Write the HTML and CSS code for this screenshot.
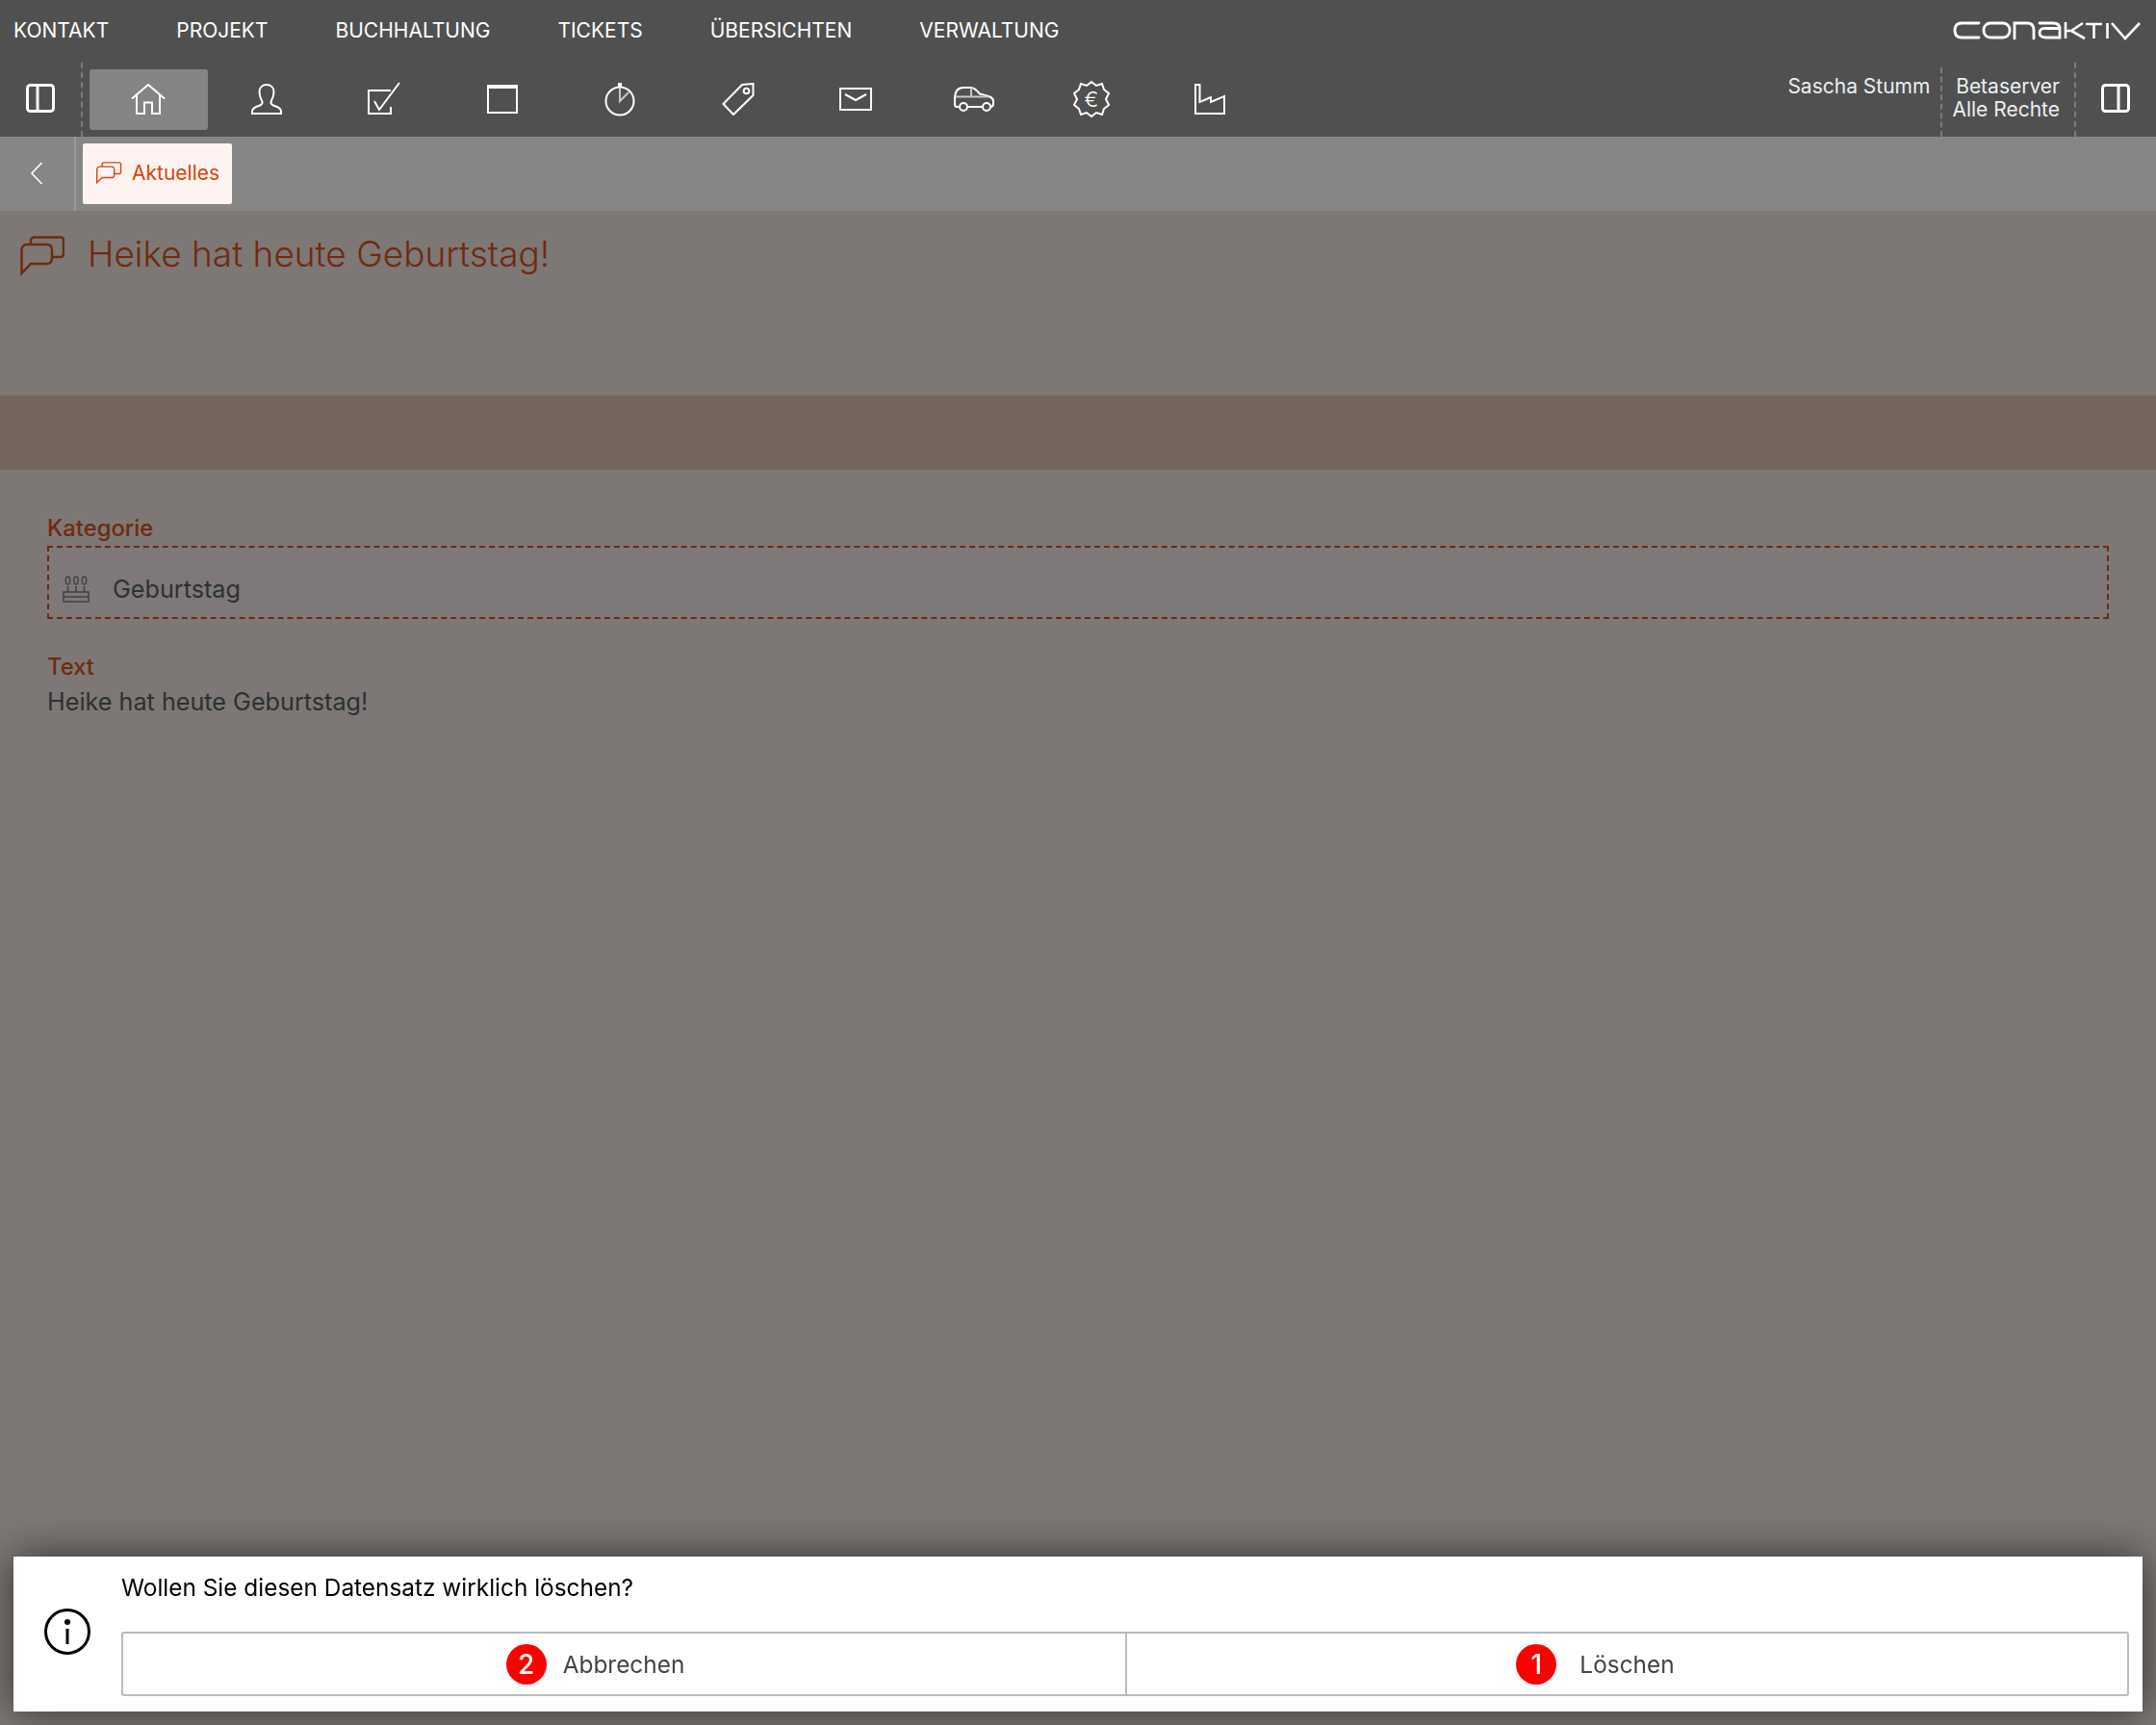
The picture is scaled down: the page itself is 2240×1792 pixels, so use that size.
FILE: index.html
```html
<!DOCTYPE html>
<html lang="de">
<head>
  <meta charset="UTF-8" />
  <title>conaktiv</title>
  <link rel="stylesheet" href="styles.css">
</head>
<body>

  <header class="topbar">
    <div class="menuRow">
      <nav class="menu">
        <span>KONTAKT</span>
        <span>PROJEKT</span>
        <span>BUCHHALTUNG</span>
        <span>TICKETS</span>
        <span>ÜBERSICHTEN</span>
        <span>VERWALTUNG</span>
      </nav>
      <svg class="logo" viewBox="0 0 196 20" role="img" aria-label="conaktiv">
        <g fill="none" stroke="#fff" stroke-width="2.800" stroke-linecap="round">
          <path d="M27 2H9Q2 2 2 9.500T9 17H27"/>
          <rect x="32" y="2" width="27" height="15" rx="7"/>
          <path d="M64 18V2H77Q84 2 84 9V18"/>
          <path d="M90 2H104Q111 2 111 8V17H97Q90 17 90 12T97 7.500H111"/>
        </g>
        <g fill="none" stroke="#fff" stroke-width="2.600">
          <path d="M117 1V18M117 10H123L135 2M123 10L137 18"/>
          <path d="M138 3H155M146.500 3V18"/>
          <path d="M160.500 2V18"/>
          <path d="M165 2L179 18L194 2"/>
        </g>
      </svg>
    </div>
    <div class="iconRow">
      <div class="panelBtn">
        <svg class="icon wide" width="30" height="30" viewBox="0 0 30 30"><rect x="1.500" y="1.500" width="27" height="27" rx="3"/><path d="M12 1.500V28.500"/></svg>
      </div>
      <div class="tools">
        <div class="tool active">
          <svg class="icon" width="36" height="32" viewBox="0 0 36 32"><path d="M1 15.500L18 1L35 15.500M6 11.500V31H14V19.500H22V31H30V11.500"/></svg>
        </div>
        <div class="tool">
          <svg class="icon" width="34" height="32" viewBox="0 0 34 32"><path d="M2 31V28.500C2 25 6 24 10 22.500C13 21 13 19.500 12 17.500C10 14 9.500 11 9.500 8.500C9.500 3.500 13 1 17 1S24.500 3.500 24.500 8.500C24.500 11 24 14 22 17.500C21 19.500 21 21 24 22.500C28 24 32 25 32 28.500V31Z"/></svg>
        </div>
        <div class="tool">
          <svg class="icon" width="36" height="36" viewBox="0 0 36 36"><path d="M25 9H2V33H25V26M8 20L13 29L34 1"/></svg>
        </div>
        <div class="tool">
          <svg class="icon" width="32" height="32" viewBox="0 0 32 32"><rect x="1" y="2" width="30" height="28"/><path class="thick" d="M1 3H31"/></svg>
        </div>
        <div class="tool">
          <svg class="icon" width="32" height="36" viewBox="0 0 32 36"><circle cx="16" cy="20" r="14.500"/><path class="thick" d="M16 1V6"/><path class="soft" d="M16 6V20L25 11"/></svg>
        </div>
        <div class="tool">
          <svg class="icon" width="34" height="34" viewBox="0 0 34 34"><path d="M1.500 22L21 2L32.500 1V13L12 33Z"/><circle cx="25.500" cy="8.500" r="2.800"/></svg>
        </div>
        <div class="tool">
          <svg class="icon" width="34" height="24" viewBox="0 0 34 24"><rect x="1" y="1" width="32" height="22"/><path d="M6 7L17 13L28 7"/></svg>
        </div>
        <div class="tool">
          <svg class="icon" width="42" height="26" viewBox="0 0 42 26"><path d="M6 21H3C1.500 21 1 20 1 18V13C1 6 3 1 10 1H17C21 1 23 3 27 7.500C33 9 41 10 41 15V18C41 20 40 21 38 21M14 21H30"/><circle cx="10" cy="21" r="4"/><circle cx="34" cy="21" r="4"/><path class="soft" d="M2 10.500H36M18 1V10"/></svg>
        </div>
        <div class="tool">
          <svg class="icon" width="38" height="38" viewBox="0 0 38 38"><path d="M19 1L24 5L30 3L32 9L37 13L34 19L37 25L32 29L30 35L24 33L19 37L14 33L8 35L6 29L1 25L4 19L1 13L6 9L8 3L14 5Z"/><text class="euro" x="19" y="27" text-anchor="middle">€</text></svg>
        </div>
        <div class="tool">
          <svg class="icon" width="32" height="32" viewBox="0 0 32 32"><path d="M1 1H5.500V19L17 14V19L31 13V31H1Z"/></svg>
        </div>
      </div>
      <div class="userInfo">
        <div class="userName">Sascha Stumm</div>
        <div class="serverInfo">Betaserver<br>Alle Rechte</div>
      </div>
      <div class="panelBtn right">
        <svg class="icon wide" width="30" height="30" viewBox="0 0 30 30"><rect x="1.500" y="1.500" width="27" height="27" rx="3"/><path d="M18 1.500V28.500"/></svg>
      </div>
    </div>
  </header>

  <div class="tabbar">
    <div class="backBtn">
      <svg class="chevron" width="14" height="24" viewBox="0 0 14 24"><path d="M12.500 1L2 12L12.500 23"/></svg>
    </div>
    <div class="tab">
      <svg class="chat" width="28" height="24" viewBox="0 0 46 42"><path d="M1.500 38V15C1.500 11 4 9 7 9H28C31 9 33 11 33 15V23C33 27 31 29 28 29H11Z"/><path d="M11 9V5C11 3 13 1.500 15 1.500H42C44 1.500 45 3 45 5V18C45 21 44 22 42 22H33"/></svg>
      <span>Aktuelles</span>
    </div>
  </div>

  <main class="content">
    <div class="titleArea">
      <svg class="chat dark" width="46" height="42" viewBox="0 0 46 42"><path d="M1.500 39V15C1.500 11 4 9 7 9H28C31 9 33 11 33 15V23C33 27 31 29 28 29H11Z"/><path d="M11 9V5C11 3 13 1.500 15 1.500H42C44 1.500 45 3 45 5V18C45 21 44 22 42 22H33"/></svg>
      <h1>Heike hat heute Geburtstag!</h1>
    </div>
    <div class="band"></div>
    <div class="fields">
      <label class="fieldLabel">Kategorie</label>
      <div class="selectBox">
        <svg class="cake" width="28" height="28" viewBox="0 0 28 28"><ellipse cx="5.500" cy="5" rx="2.200" ry="4"/><ellipse cx="14" cy="5" rx="2.200" ry="4"/><ellipse cx="22.500" cy="5" rx="2.200" ry="4"/><path d="M5.500 11V17M14 11V17M22.500 11V17M1 17H27V27H1ZM1 22H27"/></svg>
        <span>Geburtstag</span>
      </div>
      <label class="fieldLabel second">Text</label>
      <div class="fieldValue">Heike hat heute Geburtstag!</div>
    </div>
  </main>

  <div class="dialog">
    <svg class="infoIcon" width="48" height="48" viewBox="0 0 48 48"><circle cx="24" cy="24" r="22.500"/><circle class="dot" cx="24" cy="14" r="3"/><path d="M24 21V37"/></svg>
    <div class="dialogBody">
      <div class="dialogText">Wollen Sie diesen Datensatz wirklich löschen?</div>
      <div class="buttons">
        <div class="btn"><span class="badge">2</span>Abbrechen</div>
        <div class="btn second"><span class="badge">1</span>Löschen</div>
      </div>
    </div>
  </div>

</body>
</html>
```

FILE: styles.css
```css
* {
  box-sizing: border-box;
}

body {
  margin: 0;
  height: 1792px;
  display: flex;
  flex-direction: column;
  overflow: hidden;
  background: #7d7875;
  font-family: Inter, "Liberation Sans", sans-serif;
  font-size: 24px;
}

.topbar {
  height: 142px;
  flex: none;
  background: #505050;
  color: #fff;
}

.menuRow {
  height: 62px;
  display: flex;
  justify-content: space-between;
  padding: 21px 15px 0 14px;
}

.menu {
  display: flex;
  gap: 70px;
  font-size: 21px;
  line-height: 22px;
}

.logo {
  width: 196px;
  height: 20px;
  margin-top: 1px;
}

.iconRow {
  height: 80px;
  display: flex;
}

.icon {
  fill: none;
  stroke: #fff;
  stroke-width: 2;
}

.icon.wide {
  stroke-width: 3;
}

.icon .thick {
  stroke-width: 4;
}

.icon .soft {
  stroke: #c8c8c8;
}

.icon .euro {
  fill: #fff;
  stroke: none;
  font-size: 22px;
  font-weight: 300;
}

.panelBtn {
  width: 86px;
  height: 77px;
  margin-top: 3px;
  padding: 0 0 3px 27px;
  display: flex;
  align-items: center;
  border-right: 2px dashed #7c7c7c;
}

.panelBtn.right {
  width: 85px;
  padding-left: 26px;
  border-right: none;
  border-left: 2px dashed #7c7c7c;
}

.tools {
  flex: 1;
  display: flex;
  padding: 10px 0 7px 7px;
}

.tool {
  width: 122.500px;
  height: 63px;
  padding-bottom: 2px;
  display: flex;
  align-items: center;
  justify-content: center;
  border-radius: 3px;
}

.tool.active {
  background: #848484;
}

.userInfo {
  display: flex;
  font-size: 21px;
  line-height: 24px;
  color: #eceff2;
}

.userName {
  padding: 16px 11px 0 0;
}

.serverInfo {
  height: 72px;
  margin-top: 8px;
  padding: 8px 15px 0 10px;
  text-align: right;
  border-left: 2px dashed #7c7c7c;
}

.tabbar {
  height: 77px;
  flex: none;
  display: flex;
  background: #868686;
}

.backBtn {
  width: 79px;
  padding: 0 0 2px 31px;
  display: flex;
  align-items: center;
  border-right: 2px solid #9a9a9a;
}

.chevron {
  fill: none;
  stroke: #fff;
  stroke-width: 1.600;
}

.tab {
  width: 155px;
  height: 63px;
  margin: 7px 0 0 7px;
  padding: 0 0 2px 13px;
  display: flex;
  align-items: center;
  gap: 10px;
  background: #fff3f1;
  border-radius: 2px;
  color: #d2470f;
  font-size: 21px;
}

.chat {
  flex: none;
  fill: none;
  stroke: #d2470f;
  stroke-width: 2.500;
}

.chat.dark {
  margin-top: 2px;
  stroke: #702a10;
}

.content {
  flex: 1;
}

.titleArea {
  height: 192px;
  display: flex;
  align-items: flex-start;
  gap: 24px;
  padding: 24px 0 0 21px;
}

h1 {
  margin: 0;
  font-size: 37px;
  line-height: 42px;
  font-weight: 300;
  color: #702a10;
}

.band {
  height: 77px;
  background: #76655d;
}

.fields {
  padding: 46px 49px 0;
}

.fieldLabel {
  display: block;
  font-size: 23.800px;
  font-weight: 450;
  line-height: 30px;
  color: #702a10;
}

.fieldLabel.second {
  margin-top: 35px;
}

.selectBox {
  height: 76px;
  margin-top: 3px;
  padding: 13px 0 0 14px;
  display: flex;
  align-items: center;
  gap: 24px;
  background: #7e7878;
  border: 2px dashed #702a10;
  color: #2c3034;
  font-size: 25.200px;
}

.cake {
  fill: none;
  stroke: #3d4244;
  stroke-width: 1.500;
}

.fieldValue {
  margin-top: 6px;
  line-height: 30px;
  color: #2c3034;
  font-size: 25.200px;
}

.dialog {
  position: fixed;
  left: 14px;
  right: 14px;
  bottom: 14px;
  height: 161px;
  display: flex;
  align-items: flex-start;
  padding: 0 14px 0 32px;
  background: #fff;
  box-shadow: 0 0 40px rgba(0, 0, 0, 0.6);
  font-size: 24.400px;
}

.infoIcon {
  flex: none;
  margin-top: 54px;
  fill: none;
  stroke: #000;
  stroke-width: 3;
}

.infoIcon .dot {
  fill: #000;
  stroke: none;
}

.dialogBody {
  flex: 1;
  margin-left: 32px;
  min-width: 0;
}

.dialogText {
  margin-top: 16px;
  line-height: 32px;
  color: #000;
}

.buttons {
  height: 67px;
  margin-top: 30px;
  display: flex;
  border: 2px solid #bcbcbc;
  border-radius: 3px;
}

.btn {
  width: 50%;
  padding-right: 60px;
  display: flex;
  align-items: center;
  justify-content: center;
  gap: 17px;
  color: #444;
}

.btn.second {
  padding-right: 66px;
  gap: 24px;
  border-left: 2px solid #bcbcbc;
}

.badge {
  width: 42px;
  height: 42px;
  display: flex;
  align-items: center;
  justify-content: center;
  border-radius: 50%;
  background: #f00;
  color: #fff;
  font-size: 28px;
  font-weight: 500;
}
```
